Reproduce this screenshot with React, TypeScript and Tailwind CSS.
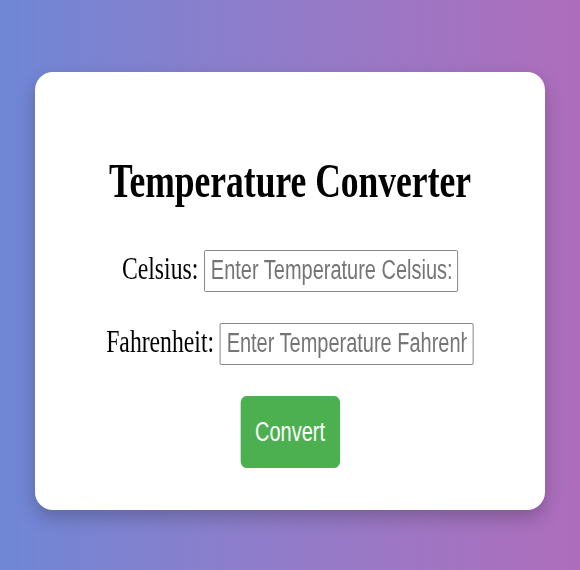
import React, { useState } from 'react';

// The reference is a narrow rendering, so the card contents are squeezed horizontally.
export default function App() {
  const [celsius, setCelsius] = useState('');
  const [fahrenheit, setFahrenheit] = useState('');

  function convert() {
    if (celsius !== '') {
      setFahrenheit(String((parseFloat(celsius) * 9) / 5 + 32));
    } else if (fahrenheit !== '') {
      setCelsius(String(((parseFloat(fahrenheit) - 32) * 5) / 9));
    }
  }

  return (
    <div className="min-h-[570px] w-full bg-linear-to-r from-[#6e87d6] to-[#ae6dbc] pt-[72px] font-['Liberation_Serif',serif]">
      <div className="mx-auto w-[510px] rounded-[18px] bg-white pt-[81px] pb-[42px] shadow-[0_8px_18px_rgba(0,0,0,0.22)]">
        <div className="flex scale-x-[0.74] flex-col items-center">
          <h1 className="text-[48px] font-bold leading-[55px] text-black">
            Temperature Converter
          </h1>

          <div className="mt-[36px] flex items-baseline gap-2">
            <label className="text-[32px] text-black">Celsius:</label>
            <input
              value={celsius}
              onChange={(e) => setCelsius(e.target.value)}
              placeholder="Enter Temperature Celsius:"
              className="h-[42px] w-[343px] rounded-[2px] border border-[#767676] px-2 font-['Liberation_Sans',Arial,sans-serif] text-[27px] text-black placeholder:text-[#757575] outline-none"
            />
          </div>

          <div className="mt-[25px] flex items-baseline gap-2">
            <label className="text-[32px] text-black">Fahrenheit:</label>
            <input
              value={fahrenheit}
              onChange={(e) => setFahrenheit(e.target.value)}
              placeholder="Enter Temperature Fahrenheit:"
              className="h-[42px] w-[343px] rounded-[2px] border border-[#767676] px-2 font-['Liberation_Sans',Arial,sans-serif] text-[27px] text-black placeholder:text-[#757575] outline-none"
            />
          </div>

          <button
            onClick={convert}
            className="mt-[31px] h-[72px] w-[135px] rounded-[8px] bg-[#4caf50] font-['Liberation_Sans',Arial,sans-serif] text-[27px] text-white"
          >
            Convert
          </button>
        </div>
      </div>
    </div>
  );
}
